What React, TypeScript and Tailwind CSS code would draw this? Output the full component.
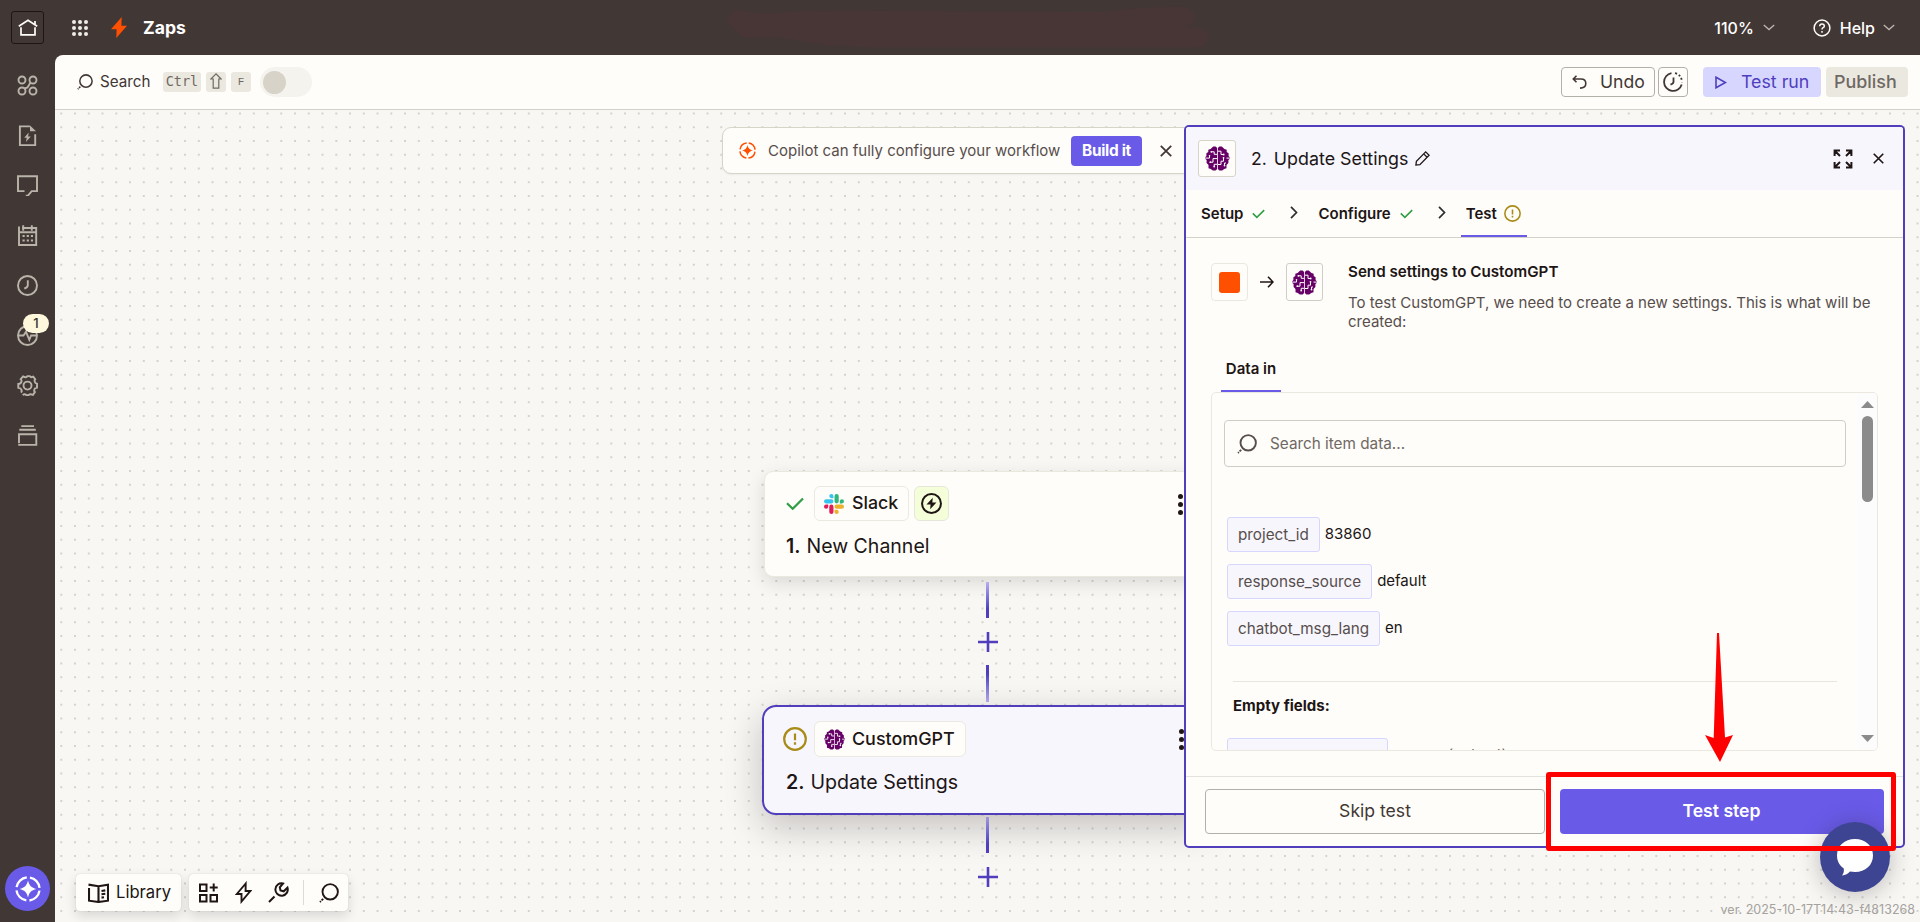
import type { ReactNode } from "react";

interface IconProps {
  className?: string;
}

interface Field {
  name: string;
  value: string;
}

const fields: Field[] = [
  { name: "project_id", value: "83860" },
  { name: "response_source", value: "default" },
  { name: "chatbot_msg_lang", value: "en" },
];

const BrainIcon = ({ className }: IconProps) => (
  <svg viewBox="0 0 25 25" className={className}>
    <g fill="#660066">
      <path d="M8.200.5h2.400L12.100 2v21l-1.500 1.500H7.800l-2-1.600-2.300-.7V19L1.600 17v-3L0 12.800v-1.400L1.400 10V7.300L3.300 6V3.800l2.300-.9z" />
      <path d="M16.800.5h-2.400L12.900 2v21l1.500 1.500h2.800l2-1.600 2.300-.7V19l1.900-2v-3l1.600-1.200v-1.400L23.600 10V7.300L21.700 6V3.800l-2.300-.9z" />
    </g>
    <g fill="none" stroke="#fff" strokeWidth="1">
      <path d="M12 8.300H9.200V5.800H6.500M0 12.100h4.500v-2M12 12.600H8v3.600H5.500M9.200 20.500v-2.200H12" />
      <path d="M13 5.200h3v3.300h2.500M25 12.100h-3.500M18.500 11.500v3.700H16v3.300h-3M19.500 19.500V17H21" />
    </g>
    <g fill="#fff">
      <circle cx="6.300" cy="5.800" r=".9" />
      <circle cx="5.300" cy="16.200" r=".9" />
      <circle cx="9.200" cy="20.600" r=".9" />
      <circle cx="4.500" cy="9.800" r=".8" />
      <circle cx="18.700" cy="8.500" r=".9" />
      <circle cx="18.500" cy="11.800" r=".9" />
      <circle cx="19.500" cy="19.600" r=".9" />
    </g>
  </svg>
);

const SearchIcon = ({ className }: IconProps) => (
  <svg viewBox="0 0 20 20" fill="none" stroke="currentColor" strokeWidth="1.900" className={className}>
    <circle cx="11.200" cy="8.800" r="7.700" />
    <path d="M4.200 15.800 1 19" strokeDasharray="2.300 1" />
  </svg>
);

const WarnIcon = ({ className }: IconProps) => (
  <svg viewBox="0 0 24 24" fill="none" stroke="#a98c18" strokeWidth="2.200" className={className}>
    <circle cx="12" cy="12" r="10.800" />
    <path d="M12 6.500v6.800M12 15.300v2.500" />
  </svg>
);

const CheckIcon = ({ className }: IconProps) => (
  <svg viewBox="0 0 18 14" fill="none" stroke="#2f9e44" strokeWidth="2.200" className={className}>
    <path d="m1 6.200 5.700 5.600L17 1.500" />
  </svg>
);

const CloseIcon = ({ className }: IconProps) => (
  <svg viewBox="0 0 12 12" fill="none" stroke="currentColor" strokeWidth="1.800" className={className}>
    <path d="m.8.8 10.400 10.400M11.200.8.8 11.200" />
  </svg>
);

const ChevronDown = () => (
  <svg viewBox="0 0 12 7" className="h-[7px] w-3" fill="none" stroke="#b9b5ac" strokeWidth="1.400">
    <path d="m.8 1 5.200 4.500L11.200 1" />
  </svg>
);

const ChevronRight = () => (
  <svg viewBox="0 0 8 13" className="mb-[3px] h-[13px] w-2" fill="none" stroke="#2d2e2e" strokeWidth="1.700">
    <path d="m1 .8 5.500 5.700L1 12.200" />
  </svg>
);

const CopilotIcon = ({ className }: IconProps) => (
  <svg viewBox="0 0 24 24" className={className}>
    <circle cx="12" cy="12" r="10.700" fill="none" stroke="currentColor" strokeWidth="2.100" strokeDasharray="13.810 3" strokeDashoffset="-1.500" />
    <path fill="currentColor" d="M12 4.200c1.200 4.800 3 6.600 7.800 7.800-4.800 1.200-6.600 3-7.800 7.800-1.200-4.800-3-6.600-7.800-7.800 4.800-1.200 6.600-3 7.800-7.800z" />
  </svg>
);

const SlackIcon = () => (
  <svg viewBox="0 0 122.800 122.800" className="h-5 w-5">
    <path fill="#E01E5A" d="M25.800 77.600a12.900 12.900 0 1 1-12.900-12.900h12.900zM32.300 77.600a12.900 12.900 0 0 1 25.800 0v32.300a12.900 12.900 0 0 1-25.800 0z" />
    <path fill="#36C5F0" d="M45.200 25.800a12.900 12.900 0 1 1 12.900-12.900v12.900zM45.200 32.300a12.900 12.900 0 0 1 0 25.800H12.900a12.900 12.900 0 0 1 0-25.800z" />
    <path fill="#2EB67D" d="M97 45.200a12.900 12.900 0 1 1 12.900 12.900H97zM90.500 45.200a12.900 12.900 0 0 1-25.800 0V12.900a12.900 12.900 0 0 1 25.800 0z" />
    <path fill="#ECB22E" d="M77.600 97a12.900 12.900 0 1 1-12.900 12.900V97zM77.600 90.500a12.900 12.900 0 0 1 0-25.800h32.300a12.900 12.900 0 0 1 0 25.800z" />
  </svg>
);

const sidebarIcons: ReactNode[] = [
  <>
    <circle cx="5" cy="5" r="3.500" />
    <circle cx="16" cy="5" r="3.500" />
    <circle cx="5" cy="16" r="3.500" />
    <circle cx="16" cy="16" r="3.500" />
    <path d="M7.500 13.500 10.500 12.500 13.500 7.500" />
  </>,
  <>
    <path d="M18.200 9.200v10.900H2.900V1.400h10" />
    <path d="M13 .5 19 6.200h-6z" fill="currentColor" stroke="none" />
    <path d="m11.700 7.500-4.500 5.300h2.600l-.9 4.300 4.900-5.600h-2.700z" fill="currentColor" stroke="none" />
  </>,
  <path d="M7.500 16.100H1V1.300h19v14.800h-5.300l-3.900 4.700h-2" />,
  <>
    <path d="M2 1.500V20h17.200V3H5M2 7.200h17M6.200.3v5.500M14.800.3v5.500" />
    <path d="M5.500 11h10.500M5.500 15.500h10.500" strokeDasharray="2.200 2" strokeWidth="2.200" />
  </>,
  <>
    <circle cx="10.500" cy="10.500" r="9.500" />
    <path d="M10.800 5.300v4.900q0 2-3.500 3.500" />
  </>,
  <>
    <circle cx="10.500" cy="10.500" r="9.500" />
    <path d="M1 10.500h5.500L9 6.800l3.300 8 1.800-4.300H20" />
  </>,
  <>
    <path d="M3.800 17.500q1.700-1.100.3-3.300-.6-1.200-2.800-1.500V8.900q2.800-.2 3.200-2.400.3-1.300-.8-2.400l2.300-2.700q1.500.9 2.900.8 1.300 0 1.600-1.100h2.200q.3 1.100 1.600 1.100l1.900-.6 2 2.600q-1 1.300-.4 2.500.5 1.600 2.200 2v3.900q-2.200.3-2.700 1.900-.5 1.400.6 2.600l-1.900 2.700q-1.800-.8-2.900-.5-1 .2-1.600 1h-2q-.6-.9-1.700-1-1-.1-2.200.7" />
    <circle cx="10.500" cy="10.600" r="4" />
  </>,
  <path d="M4.300 1.100H17M2.300 4.800h16.500M2 18.200V9.200h17.300v10.700H1.200" />,
];

const Sidebar = () => (
  <aside className="flex w-[55px] shrink-0 flex-col items-center bg-[#413735] text-[#b9b4a9]">
    <nav className="mt-5 flex flex-col gap-[29px]">
      {sidebarIcons.map((icon, i) => (
        <div key={i} className="relative">
          <svg viewBox="0 0 21 21" className="h-[21px] w-[21px]" fill="none" stroke="currentColor" strokeWidth="1.900">
            {icon}
          </svg>
          {i === 5 && (
            <span className="absolute -top-[11px] left-[6px] flex h-[19px] w-[26px] items-center justify-center rounded-full bg-[#fff8dc] text-[13px] font-medium text-[#3a2f2c]">
              1
            </span>
          )}
        </div>
      ))}
    </nav>
    <button className="mt-auto mb-[11px] flex h-[45px] w-[45px] items-center justify-center rounded-full bg-[#695be8] text-white">
      <CopilotIcon className="h-[26px] w-[26px]" />
    </button>
  </aside>
);

const Header = () => (
  <header className="relative flex h-[55px] shrink-0 items-center bg-[#413735] text-white">
    <div className="ml-[11px] flex h-[33px] w-[33px] items-center justify-center rounded-[3px] border border-[#1f1513]">
      <svg viewBox="0 0 20 17" className="h-[17px] w-5" fill="none" stroke="#fffdf9" strokeWidth="1.700">
        <path d="M.8 7.300 10 1.300l9.200 6M17 5.500V2M3 8.200v7.600h14V8.200" />
      </svg>
    </div>
    <svg viewBox="0 0 16 16" className="ml-7 h-4 w-4" fill="#efece6">
      {[2, 8, 14].map((y) => [2, 8, 14].map((x) => <circle key={`${x}-${y}`} cx={x} cy={y} r="2" />))}
    </svg>
    <svg viewBox="0 0 16 21" className="ml-[23px] h-[21px] w-4" fill="#ff4f00">
      <path d="M10.700 0 0 12.200h5.600L5.300 21 16 8.800h-5.600z" />
    </svg>
    <span className="ml-4 text-[17.600px] leading-none font-bold">Zaps</span>
    {/* brushed-out title */}
    <svg viewBox="0 0 500 55" className="absolute top-0 left-[720px] h-[55px] w-[500px]" fill="#483636">
      <path d="M7 20Q9 9 20 10q15 3 30 3 40-3 90-2.500 90 1.500 240 1.500Q430 6 465 7q10 2 10 10t-8 10q23 0 22 10t-12 10.500H150Q100 46 75 40 50 36 27 38 18 36 18 31 8 27 7 20z" />
    </svg>
    <div className="mr-[25px] ml-auto flex items-center">
      <span className="text-[16px] leading-none font-medium">110%</span>
      <span className="ml-[9px]">
        <ChevronDown />
      </span>
      <svg viewBox="0 0 18 18" className="ml-[38px] h-[18px] w-[18px]" fill="none" stroke="#fffdf9" strokeWidth="1.500">
        <circle cx="9" cy="9" r="7.900" />
        <path d="M6.700 7.300q.1-2.200 2.300-2.200t2.300 1.800q0 1.200-1.200 1.800-1.100.6-1.100 1.800M9 12v1.700" />
      </svg>
      <span className="ml-[9px] text-[16px] leading-none font-medium">Help</span>
      <span className="ml-2">
        <ChevronDown />
      </span>
    </div>
  </header>
);

const Toolbar = () => (
  <div className="flex h-[55px] shrink-0 items-center rounded-tl-lg border-b border-[#d3d1c8] bg-[#fffdf9] text-[#413735]">
    <SearchIcon className="ml-[22px] h-4 w-4" />
    <span className="ml-[7px] w-[63px] text-[15.200px] leading-none">Search</span>
    <div className="flex gap-[5px] font-['DejaVu_Sans_Mono',monospace] text-[13px] leading-none text-[#6f6864]">
      <kbd className="flex h-5 w-[38px] items-center justify-center rounded-[3px] bg-[#ebe9df] font-['DejaVu_Sans_Mono',monospace] text-[13.500px]">Ctrl</kbd>
      <kbd className="flex h-5 w-5 items-center justify-center rounded-[3px] bg-[#ebe9df]">
        <svg viewBox="0 0 12 16" className="mb-[2px] h-4 w-3" fill="none" stroke="currentColor" strokeWidth="1.200">
          <path d="M6 .8.900 6h2.300v9.200h5.600V6h2.300z" />
        </svg>
      </kbd>
      <kbd className="flex h-5 w-5 items-center justify-center rounded-[3px] bg-[#ebe9df] text-[11px]">F</kbd>
    </div>
    <div className="ml-[9px] flex h-[30px] w-[52px] items-center rounded-full bg-[#f5f3ee] pl-[3px]">
      <div className="h-[23px] w-[23px] rounded-full bg-[#d7d3c9]" />
    </div>
    <div className="mr-3 ml-auto flex items-center text-[17.600px] leading-none">
      <button className="flex h-[30px] w-[94px] items-center rounded-[4px] border border-[#b3b0aa] pl-[10px]">
        <svg viewBox="0 0 15 14" className="h-[14px] w-[15px]" fill="none" stroke="currentColor" strokeWidth="1.600">
          <path d="M4.500.8 1.300 4l3.200 3.200M1.300 4H9q4.800 0 4.800 4.500 0 4.600-5.800 4.600" />
        </svg>
        <span className="ml-[13px]">Undo</span>
      </button>
      <button className="ml-[3px] flex h-[30px] w-[30px] items-center justify-center rounded-[4px] border border-[#b3b0aa]">
        <svg viewBox="0 0 20 20" className="h-5 w-5 shrink-0" fill="none" stroke="currentColor" strokeWidth="1.800">
          <path d="M8.500 1.100A9 9 0 1 0 18.700 12.500" />
          <path d="M12 1.200q6.500 1.500 7 9" strokeDasharray="2 2" />
          <path d="M10.500 5.500V9.700q0 1.800-3 3" />
        </svg>
      </button>
      <button className="ml-[15px] flex h-[30px] w-[118px] items-center rounded-[4px] bg-[#d6d6ff] pl-3 text-[#503ebd]">
        <svg viewBox="0 0 12 13" className="h-[13px] w-3" fill="none" stroke="currentColor" strokeWidth="1.600">
          <path d="M1 1.200v10.600L10.500 6.500z" />
        </svg>
        <span className="ml-[14px] text-[17.800px]">Test run</span>
      </button>
      <button className="ml-[5px] flex h-[30px] w-[82px] items-center rounded-[4px] bg-[#ebe9df] pl-2 text-[17.900px] font-medium text-[#6f6864]">Publish</button>
    </div>
  </div>
);

const CopilotBanner = () => (
  <div className="absolute top-[17px] left-[667px] flex h-[47px] w-[500px] items-center rounded-[9px] border border-[#d7d5c8] bg-[#fffdf9] shadow-xs">
    <CopilotIcon className="ml-4 h-[17px] w-[17px] text-[#ff4f00]" />
    <span className="ml-3 w-[303px] text-[15px] leading-none whitespace-nowrap text-[#574e4c]">Copilot can fully configure your workflow</span>
    <button className="flex h-[30px] w-[71px] items-center justify-center rounded-[4px] bg-[#695be8] text-[15.400px] leading-none font-bold text-white">
      <span className="tracking-[-0.3px]">Build it</span>
    </button>
    <CloseIcon className="ml-[18px] h-3 w-3 text-[#413735]" />
  </div>
);

const Dots = () => (
  <div className="mt-px mr-[27px] ml-auto flex flex-col gap-[3px]">
    <i className="h-[5px] w-[5px] rounded-full bg-[#201515]" />
    <i className="h-[5px] w-[5px] rounded-full bg-[#201515]" />
    <i className="h-[5px] w-[5px] rounded-full bg-[#201515]" />
  </div>
);

const PlusButton = () => (
  <svg viewBox="0 0 20 20" className="h-5 w-5" stroke="#503ebd" strokeWidth="2.600">
    <path d="M10 0v20M0 10h20" />
  </svg>
);

const Flow = () => (
  <div className="absolute top-[361px] left-[707px] flex w-[451px] flex-col items-center text-[#201515]">
    <div className="h-[106px] w-[447px] rounded-[9px] border border-[#ebe8de] bg-[#fffdf9] pt-[14px] pl-[21px] shadow-[0_6px_18px_rgba(32,21,21,0.13)]">
      <div className="flex items-center">
        <CheckIcon className="h-[14px] w-[18px]" />
        <div className="ml-[10px] flex h-[35px] w-[95px] items-center rounded-[6px] border border-[#ebe9e0] pl-[9px]">
          <SlackIcon />
          <span className="mb-px ml-2 text-[17.800px] leading-none font-medium">Slack</span>
        </div>
        <div className="ml-[5px] flex h-[35px] w-[35px] items-center justify-center rounded-[6px] border border-[#e6e6da] bg-[#f4ffda]">
          <svg viewBox="0 0 20 20" className="h-[21px] w-[21px]">
            <circle cx="10" cy="10" r="9" fill="none" stroke="#201515" strokeWidth="1.900" />
            <path d="m11.200 4.500-6 6.500h3.900l-.4 4.500 6-6.500h-3.900z" fill="#201515" />
          </svg>
        </div>
        <Dots />
      </div>
      <p className="mt-[14px] text-[19.500px] leading-[22px]">
        <span className="mr-[6px] font-semibold">1.</span>New Channel
      </p>
    </div>
    <div className="mt-[5px] h-9 w-[3px] bg-linear-to-b from-[#b9aef0] to-[#503ebd] to-75%" />
    <div className="mt-[14px] mb-[13px]">
      <PlusButton />
    </div>
    <div className="h-[37px] w-[3px] bg-linear-to-b from-[#503ebd] from-25% to-[#b9aef0]" />
    <div className="mt-[3px] h-[110px] w-[451px] rounded-[14px] border-2 border-[#503ebd] bg-[#f7f6fd] pt-[14px] pl-[19px] shadow-[0_12px_36px_rgba(32,21,21,0.24)]">
      <div className="flex items-center">
        <WarnIcon className="h-6 w-6" />
        <div className="ml-[7px] flex h-[36px] w-[152px] items-center rounded-[6px] border border-[#ebe9e0] bg-[#fffdf9] pl-[9px]">
          <BrainIcon className="h-[21px] w-[21px]" />
          <span className="ml-[7px] text-[17.900px] leading-none font-medium">CustomGPT</span>
        </div>
        <Dots />
      </div>
      <p className="mt-[14px] ml-[3px] text-[19.600px] leading-[22px]">
        <span className="mr-[6px] font-semibold">2.</span>Update Settings
      </p>
    </div>
    <div className="mt-[2px] h-9 w-[3px] bg-linear-to-b from-[#a297dc] to-[#503ebd] to-75%" />
    <div className="mt-[14px]">
      <PlusButton />
    </div>
  </div>
);

const BottomBar = () => (
  <div className="absolute bottom-[11px] left-[21px] flex gap-2 text-[#201515]">
    <button className="flex h-[37px] w-[105px] items-center rounded-[4px] bg-[#fffdf9] pl-3 shadow-[0_5px_12px_rgba(32,21,21,0.14),0_0_1px_rgba(32,21,21,0.25)]">
      <svg viewBox="0 0 21 20" className="h-5 w-[21px] shrink-0" fill="none" stroke="currentColor" strokeWidth="2.100">
        <path d="M1 5v12.700l9.500 1.300 9.500-1.300V1.800L10.500 3.200.5 1.600M10.500 3.200V19M13.500 8l3.800-.6M13.500 11.300l3.800-.6M13.500 14.600l2.500-.4" />
      </svg>
      <span className="ml-[7px] text-[16.600px] leading-none">Library</span>
    </button>
    <div className="flex h-[37px] w-[159px] items-center rounded-[4px] bg-[#fffdf9] pl-[10px] shadow-[0_5px_12px_rgba(32,21,21,0.14),0_0_1px_rgba(32,21,21,0.25)]">
      <svg viewBox="0 0 19 20" className="h-5 w-[19px]" fill="none" stroke="currentColor" strokeWidth="2">
        <path d="M1 1.500h6.500V8H1zM1 12h6.500v6.500H1zM11.500 12H18v6.500h-6.500zM14.700.5v8M10.700 4.500h8" />
      </svg>
      <svg viewBox="0 0 17 23" className="ml-[17px] h-[23px] w-[17px]" fill="none" stroke="currentColor" strokeWidth="1.900">
        <path d="M10.700 2.500 1.800 13h4.700v7.500L15.300 10h-4.700z" />
      </svg>
      <svg viewBox="0 0 21 21" className="ml-4 h-[21px] w-[21px]" fill="none" stroke="currentColor" strokeWidth="2">
        <path d="M15 1.500a6.200 6.200 0 1 0 4.500 4.200l-3.800 3.600-3.200-.8-.7-3.200zM6.500 14.500 1 20" />
      </svg>
      <div className="ml-[14px] h-[25px] w-px bg-[#dedbd2]" />
      <SearchIcon className="ml-[15px] h-5 w-5" />
    </div>
  </div>
);

const PanelHeader = () => (
  <div className="flex h-[63px] shrink-0 items-center rounded-t-[3px] bg-[#f7f6fd] text-[#201515]">
    <div className="ml-3 flex h-[37px] w-[38px] items-center justify-center rounded-[3px] border border-[#d7d5c8] bg-[#fffdf9]">
      <BrainIcon className="h-[25px] w-[25px]" />
    </div>
    <span className="ml-[15px] text-[17.600px] leading-none">2.</span>
    <span className="ml-[7px] text-[17.850px] leading-none">Update Settings</span>
    <svg viewBox="0 0 15 15" className="ml-[7px] h-[15px] w-[15px]" fill="none" stroke="currentColor" strokeWidth="1.300">
      <path d="m10.700.9 3.400 3.400-9.200 9.300-4 .5.500-3.900zM8.700 2.900l3.400 3.400" />
    </svg>
    <svg viewBox="0 0 20 20" className="ml-auto h-5 w-5" fill="none" stroke="currentColor" strokeWidth="2">
      <path d="M1.600 7V1.600H7M2 2l5 5M13 1.600h5.400V7M18 2l-5 5M1.600 13v5.400H7M2 18l5-5M18.400 13v5.400H13M18 18l-5-5" />
    </svg>
    <CloseIcon className="mr-[19px] ml-5 h-[11px] w-[11px]" />
  </div>
);

const PanelTabs = () => (
  <div className="flex h-[48px] shrink-0 items-center border-b border-[#d3d1c8] pl-[15px] text-[15px] leading-none font-semibold text-[#201515]">
    <span>Setup</span>
    <CheckIcon className="ml-[9px] h-[10px] w-[13px]" />
    <span className="ml-[25px]">
      <ChevronRight />
    </span>
    <span className="ml-5">Configure</span>
    <CheckIcon className="ml-[9px] h-[10px] w-[13px]" />
    <span className="ml-[25px]">
      <ChevronRight />
    </span>
    <div className="ml-[15px] flex h-[47px] w-[66px] items-center border-b-2 border-[#695be8] pt-[2px] pl-[5px]">
      <span>Test</span>
      <WarnIcon className="ml-[7px] h-[17px] w-[17px]" />
    </div>
  </div>
);

const Chip = ({ children }: { children: ReactNode }) => (
  <span className="flex h-[35px] items-center rounded-[3px] border border-[#d6d6ff] bg-[#f7f6fd] px-[10px] text-[15.250px] text-[#574e4c]">{children}</span>
);

const DataBox = () => (
  <div className="flex h-[359px] w-[667px] shrink-0 overflow-hidden rounded-[5px] border border-[#ebe9df]">
    <div className="flex w-[645px] shrink-0 flex-col pt-[27px] pl-3">
      <div className="flex h-[47px] w-[622px] shrink-0 items-center rounded-[4px] border border-[#d0cec4] pl-3 text-[#6f6864]">
        <SearchIcon className="h-5 w-5 text-[#574e4c]" />
        <span className="ml-[13px] text-[15.300px] leading-none">Search item data...</span>
      </div>
      <div className="mt-[50px] ml-[3px] flex flex-col gap-3 text-[15px] leading-none">
        {fields.map((field) => (
          <div key={field.name} className="flex items-center">
            <Chip>{field.name}</Chip>
            <span className="mb-[3px] ml-[5px] text-[#201515]">{field.value}</span>
          </div>
        ))}
      </div>
      <hr className="mt-[35px] ml-[9px] w-[604px] border-[#e8e7de]" />
      <p className="mt-[17px] ml-[9px] text-[15px] leading-[14px] font-bold text-[#201515]">Empty fields:</p>
      <div className="mt-[25px] ml-[3px] flex shrink-0 items-center text-[15px] leading-none">
        <Chip>
          <span className="w-[139px]">persona</span>
        </Chip>
        <span className="mb-[2px] ml-[6px] text-[#6f6864] italic">source (not set)</span>
      </div>
    </div>
    <div className="flex grow flex-col items-center bg-[#fcfcfd] pt-2 pb-2">
      <svg viewBox="0 0 13 7" className="h-[7px] w-[13px]" fill="#8b8b8b">
        <path d="M6.500 0 13 7H0z" />
      </svg>
      <div className="mt-2 h-[86px] w-[11px] rounded-full bg-[#8b8b8b]" />
      <svg viewBox="0 0 13 7" className="mt-auto h-[7px] w-[13px]" fill="#8b8b8b">
        <path d="M0 0h13L6.500 7z" />
      </svg>
    </div>
  </div>
);

const StepPanel = () => (
  <section className="absolute top-[15px] left-[1129px] flex h-[723px] w-[721px] flex-col rounded-[5px] border-2 border-[#503ebd] bg-[#fffdf9]">
    <PanelHeader />
    <PanelTabs />
    <div className="flex grow flex-col pl-[25px]">
      <div className="mt-[25px] flex">
        <div className="flex h-[38px] w-[37px] items-center justify-center rounded-[4px] border border-[#ebe9df]">
          <div className="h-[21px] w-[21px] rounded-[3px] bg-[#ff4f00]" />
        </div>
        <svg viewBox="0 0 14 12" className="mt-[13px] ml-3 h-3 w-[14px]" fill="none" stroke="#201515" strokeWidth="1.600">
          <path d="M0 6h13M8 .8 13 6l-5 5.200" />
        </svg>
        <div className="ml-3 flex h-[38px] w-[37px] items-center justify-center rounded-[3px] border border-[#d0cec4]">
          <BrainIcon className="h-[25px] w-[25px]" />
        </div>
        <div className="ml-[25px] w-[530px]">
          <h3 className="text-[15.200px] leading-[18px] font-semibold text-[#201515]">Send settings to CustomGPT</h3>
          <p className="mt-3 text-[15.020px] leading-[19px] text-[#574e4c]">To test CustomGPT, we need to create a new settings. This is what will be created:</p>
        </div>
      </div>
      <div className="mt-[26px] ml-[10px] flex h-[35px] w-[60px] items-start justify-center border-b-2 border-[#695be8] pt-[3px] text-[15px] leading-[18px] font-semibold text-[#201515]">
        Data in
      </div>
      <DataBox />
    </div>
    <div className="flex h-[70px] shrink-0 items-start border-t border-[#e3e2dc] pt-3 pl-[19px] text-[17.600px] leading-none">
      <button className="h-[45px] w-[340px] rounded-[4px] border border-[#b3b0aa] pb-px text-[#413735]">Skip test</button>
      <button className="ml-[15px] h-[45px] w-[324px] rounded-[4px] bg-[#695be8] pr-px pb-px font-semibold text-white">Test step</button>
    </div>
  </section>
);

const ChatLauncher = () => (
  <div className="absolute right-[30px] bottom-[30px] flex h-[70px] w-[70px] items-center justify-center rounded-full bg-[#3d4592] shadow-[0_2px_24px_rgba(32,21,21,0.28)]">
    <svg viewBox="0 0 36 37" className="mt-[1px] h-[37px] w-9" fill="#fff">
      <path d="M18 0c10.500 0 18 7 18 16.500S28.500 33 18 33c-2 0-3.500-.2-5-.5-2 2-4.500 3.800-8 4 1.500-1.800 2.200-4 1.800-7C2.500 26.500 0 22 0 16.500 0 7 7.500 0 18 0z" />
    </svg>
  </div>
);

const Annotations = () => (
  <>
    <svg viewBox="0 0 28 130" className="absolute top-[523px] left-[1650px] h-[130px] w-7" fill="#ff0000">
      <path d="M12 0h2l6 104.500 8-2.500-13 27L0 102l8.700 3z" />
    </svg>
    <div className="absolute top-[662px] left-[1491px] h-[79px] w-[350px] rounded-[3px] border-[5px] border-[#ff0000]" />
  </>
);

export default function App() {
  return (
    <div className="flex h-screen w-full flex-col overflow-hidden bg-[#413735] font-['Inter',sans-serif]">
      <Header />
      <div className="flex min-h-0 grow">
        <Sidebar />
        <div className="flex min-w-0 grow flex-col">
          <Toolbar />
          <main className="relative grow overflow-hidden bg-[#f8f7f4] bg-[radial-gradient(circle,#d4d2cb_0.7px,transparent_1.1px)] bg-[length:13.75px_13.75px] bg-[position:-0.6px_-3.4px]">
            <CopilotBanner />
            <Flow />
            <StepPanel />
            <BottomBar />
            <ChatLauncher />
            <Annotations />
            <p className="absolute right-[5px] bottom-1 text-[12.500px] leading-4 text-[#a5a29e]">ver. 2025-10-17T14:43-f4813268</p>
          </main>
        </div>
      </div>
    </div>
  );
}
